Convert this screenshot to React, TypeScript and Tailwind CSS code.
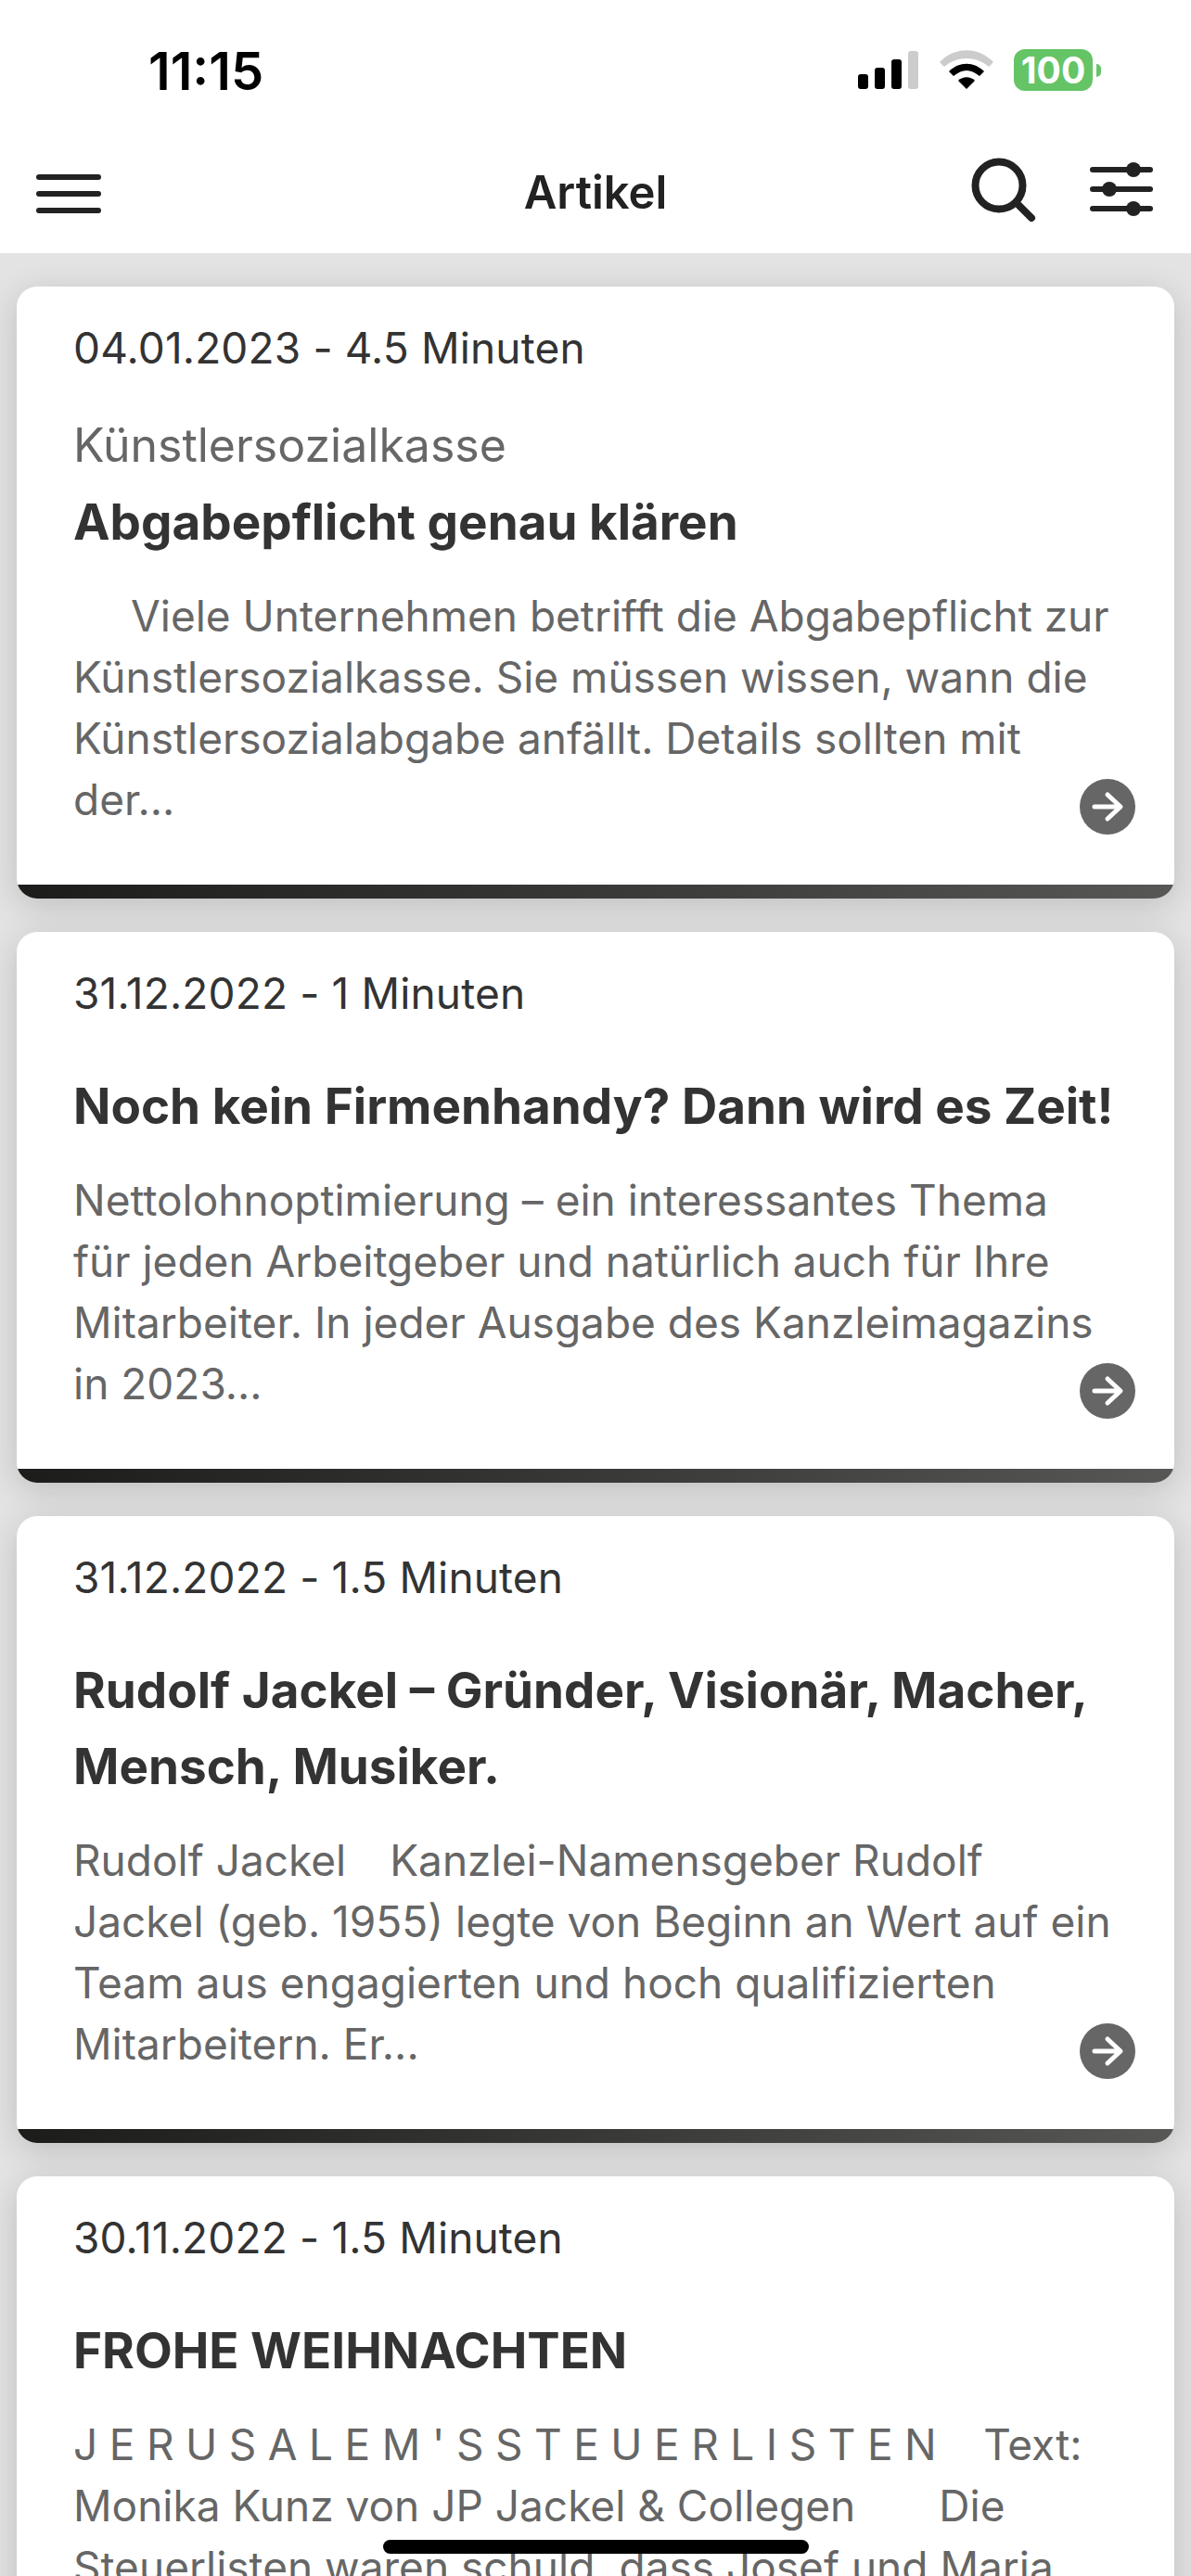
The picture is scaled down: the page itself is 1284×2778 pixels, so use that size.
import type { ReactNode } from 'react'

type Article = {
  meta: string
  kicker?: string
  title: string[]
  body: ReactNode[]
}

const articles: Article[] = [
  {
    meta: '04.01.2023 - 4.5 Minuten',
    kicker: 'Künstlersozialkasse',
    title: ['Abgabepflicht genau klären'],
    body: [
      <>
        <span className="inline-block w-[62px]" />Viele Unternehmen betrifft die Abgabepflicht zur
      </>,
      'Künstlersozialkasse. Sie müssen wissen, wann die',
      'Künstlersozialabgabe anfällt. Details sollten mit',
      'der...',
    ],
  },
  {
    meta: '31.12.2022 - 1 Minuten',
    title: ['Noch kein Firmenhandy? Dann wird es Zeit!'],
    body: [
      'Nettolohnoptimierung – ein interessantes Thema',
      'für jeden Arbeitgeber und natürlich auch für Ihre',
      'Mitarbeiter. In jeder Ausgabe des Kanzleimagazins',
      'in 2023...',
    ],
  },
  {
    meta: '31.12.2022 - 1.5 Minuten',
    title: ['Rudolf Jackel – Gründer, Visionär, Macher,', 'Mensch, Musiker.'],
    body: [
      <>
        Rudolf Jackel<span className="inline-block w-[47px]" />Kanzlei-Namensgeber Rudolf
      </>,
      'Jackel (geb. 1955) legte von Beginn an Wert auf ein',
      'Team aus engagierten und hoch qualifizierten',
      'Mitarbeitern. Er...',
    ],
  },
  {
    meta: '30.11.2022 - 1.5 Minuten',
    title: ['FROHE WEIHNACHTEN'],
    body: [
      <>
        <span className="tracking-[12.5px]">JERUSALEM'SSTEUERLISTEN</span>
        <span className="inline-block w-[38px]" />Text:
      </>,
      <>
        Monika Kunz von JP Jackel &amp; Collegen<span className="inline-block w-[90px]" />Die
      </>,
      'Steuerlisten waren schuld, dass Josef und Maria',
      '\u00a0',
    ],
  },
]

function ArticleCard({ article }: { article: Article }) {
  return (
    <div className="relative bg-white rounded-[22px] overflow-hidden shadow-[0_8px_36px_rgba(0,0,0,0.16)]">
      <div className="px-[61px] pt-[33px] pb-[59px]">
        <p className="text-[46px] leading-[66px] text-[#333] tracking-[0.15px]">{article.meta}</p>
        {article.kicker && (
          <p className="mt-[39px] mb-[9px] text-[50px] leading-[66px] text-[#666]">{article.kicker}</p>
        )}
        <div className={article.kicker ? '' : 'mt-[48px]'}>
          {article.title.map((line) => (
            <h2 key={line} className="text-[53px] leading-[82px] font-bold text-[#333] whitespace-nowrap">
              {line}
            </h2>
          ))}
        </div>
        <div className="mt-[27px]">
          {article.body.map((line, i) => (
            <p key={i} className="text-[46px] leading-[66px] text-[#666] whitespace-nowrap">
              {line}
            </p>
          ))}
        </div>
      </div>
      <div className="h-[15px] bg-gradient-to-r from-[#1c1c1a] to-[#575756]" />
      <div className="absolute right-[42px] bottom-[69px] w-[60px] h-[60px] rounded-full bg-[#666]">
        <svg width="60" height="60" viewBox="0 0 60 60" fill="none" stroke="white" strokeWidth="5" strokeLinecap="round" strokeLinejoin="round">
          <path d="M16 30h27M30 17l14 13-14 13" />
        </svg>
      </div>
    </div>
  )
}

export default function App() {
  return (
    <div className="w-[1284px] h-[2778px] overflow-hidden relative bg-[#e3e3e3] font-['Inter',sans-serif]">
      <div className="relative z-10 bg-white h-[273px]">
        <div className="h-[128px] flex justify-between">
          <span className="ml-[160px] mt-[49px] text-[56px] leading-[56px] font-semibold text-black">11:15</span>
          <div className="mr-[97px] mt-[53px] flex items-start gap-[22px]">
            <svg width="66" height="41" viewBox="0 0 66 41" className="mt-[2px]">
              <rect x="0" y="25" width="11" height="16" rx="3" fill="#000" />
              <rect x="18" y="18" width="11" height="23" rx="3" fill="#000" />
              <rect x="36" y="9" width="11" height="32" rx="3" fill="#000" />
              <rect x="54" y="0" width="11" height="41" rx="3" fill="#ccc" />
            </svg>
            <svg width="58" height="42" viewBox="0 0 58 42" className="mt-[1px]">
              <path d="M0 13C16-4 42-4 58 13l-5 5C39 6 19 6 5 18z" fill="#ccc" />
              <path d="M10 23C21 12 37 12 48 23l-5 5C33 20 25 20 15 28z" fill="#000" />
              <path d="M20 33c5-5 13-5 18 0l-9 9z" fill="#000" />
            </svg>
            <div className="flex items-center">
              <div className="w-[85px] h-[45px] rounded-[12px] bg-[#65c466] text-white text-[39px] leading-[45px] font-bold text-center">
                100
              </div>
              <div className="ml-[4px] w-[5px] h-[14px] rounded-r-full bg-[#65c466]" />
            </div>
          </div>
        </div>
        <div className="flex items-center justify-between h-[145px] relative">
          <div className="ml-[39px] w-[70px] flex flex-col gap-[12px] mt-[17px]">
            <div className="h-[6px] bg-[#222] rounded-full" />
            <div className="h-[6px] bg-[#222] rounded-full" />
            <div className="h-[6px] bg-[#222] rounded-full" />
          </div>
          <span className="absolute left-0 right-0 text-center text-[49px] font-semibold text-[#222] mt-[15px]">Artikel</span>
          <div className="flex items-start gap-[56px] mr-[39px] mt-[10px]">
            <svg width="72" height="72" viewBox="0 0 72 72" fill="none" stroke="#222" strokeWidth="8" strokeLinecap="round">
              <circle cx="30" cy="30" r="25.5" />
              <path d="M49 49l16 16" />
            </svg>
            <svg width="70" height="60" viewBox="0 0 70 60" fill="#222" className="mt-[3px]">
              <rect x="0" y="7" width="68" height="6" rx="3" />
              <rect x="0" y="28" width="68" height="6" rx="3" />
              <rect x="0" y="49" width="68" height="6" rx="3" />
              <circle cx="47" cy="10" r="8" />
              <circle cx="21" cy="31" r="8" />
              <circle cx="47" cy="52" r="8" />
            </svg>
          </div>
        </div>
      </div>
      <div className="px-[18px] pt-[36px] flex flex-col gap-[36px]">
        {articles.map((a) => (
          <ArticleCard key={a.title[0]} article={a} />
        ))}
      </div>
      <div className="absolute left-[413px] top-[2739px] w-[459px] h-[15px] rounded-full bg-black" />
    </div>
  )
}
